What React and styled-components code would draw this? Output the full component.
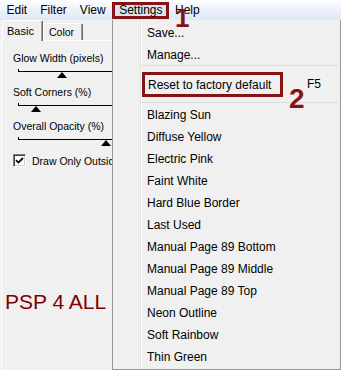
import React from "react";
import styled, { createGlobalStyle } from "styled-components";

const ANNOT = "#861414";

const GlobalStyle = createGlobalStyle`
  html, body {
    margin: 0;
    padding: 0;
    background: #fff;
  }
  body {
    font-family: "Liberation Sans", Arial, sans-serif;
    color: #000;
  }
`;

const Window = styled.div`
  position: relative;
  width: 341px;
  height: 370px;
  overflow: hidden;
  background: #f0f0f0;
  display: flex;
  flex-direction: column;
`;

// top menu bar
const MenuBar = styled.div`
  display: flex;
  align-items: flex-start;
  height: 20px;
  flex-shrink: 0;
  background: linear-gradient(to bottom, #fdfeff 0%, #eef3fa 45%, #dfe8f4 100%);
  font-size: 12px;
`;

const MenuTitle = styled.div`
  height: 20px;
  line-height: 20px;
  padding: 0 6.5px;
  white-space: nowrap;
`;

const ActiveTitle = styled.div`
  margin-top: 2px;
  line-height: 10px;
  padding: 0 3px 1px 4px;
  border: 3px solid ${ANNOT};
  background: #dbe3ee;
  white-space: nowrap;
`;

const Annotation = styled.div`
  position: absolute;
  left: ${(p) => p.$x}px;
  top: ${(p) => p.$y}px;
  font-size: ${(p) => p.$size}px;
  line-height: 1;
  font-weight: bold;
  color: ${ANNOT};
  z-index: 5;
`;

// dialog area
const Body = styled.div`
  flex: 1;
  display: flex;
  flex-direction: column;
`;

const TabStrip = styled.div`
  display: flex;
  align-items: flex-end;
  height: 20px;
  padding-left: 2px;
  font-size: 11px;
`;

const Tab = styled.div`
  box-sizing: border-box;
  position: relative;
  z-index: 1;
  width: ${(p) => (p.$selected ? 41 : 40)}px;
  height: ${(p) => (p.$selected ? 21 : 17)}px;
  margin-bottom: ${(p) => (p.$selected ? -1 : 0)}px;
  padding-left: ${(p) => (p.$selected ? 4 : 5)}px;
  line-height: ${(p) => (p.$selected ? 20 : 17)}px;
  font-size: ${(p) => (p.$selected ? 11 : 10.5)}px;
  background: #f0f0f0;
  border-top: 1px solid #fff;
  border-left: 1px solid #fff;
  border-right: 1px solid #696969;
  box-shadow: inset -1px 0 #a0a0a0;
  border-radius: 2px 2px 0 0;
`;

const Pane = styled.div`
  flex: 1;
  margin-left: 1px;
  border-top: 1px solid #fff;
  border-left: 1px solid #fff;
  padding: 11px 0 0 11px;
  font-size: 10.5px;
`;

const SliderGroup = styled.div`
  margin-bottom: 14px;
`;

const Label = styled.div`
  line-height: 13px;
  white-space: nowrap;
`;

const Track = styled.div`
  position: relative;
  box-sizing: border-box;
  width: 130px;
  height: 3px;
  margin: 4px 0 0 5px;
  border-left: 1px solid #000;
  border-bottom: 1px solid #000;
`;

const Thumb = styled.div`
  position: absolute;
  top: 3px;
  left: ${(p) => p.$pos}px;
  width: 0;
  height: 0;
  border-left: 5.5px solid transparent;
  border-right: 5.5px solid transparent;
  border-bottom: 6px solid #000;
`;

const CheckRow = styled.div`
  display: flex;
  align-items: center;
  gap: 6px;
  height: 13px;
  margin-top: 2px;
  white-space: nowrap;
`;

const CheckBox = styled.div`
  box-sizing: border-box;
  width: 13px;
  height: 13px;
  background: #fff;
  border: 1px solid;
  border-color: #808080 #fff #fff #808080;
  box-shadow: inset 1px 1px #404040, inset -1px -1px #d4d0c8;
  display: flex;
  align-items: center;
  justify-content: center;
`;

const Watermark = styled.div`
  margin: 123px 0 0 -8px;
  font-size: 21px;
  line-height: 24px;
  color: #800000;
  white-space: nowrap;
`;

// dropdown menu
const Dropdown = styled.div`
  position: absolute;
  left: 112px;
  top: 20px;
  width: 227px;
  height: 348px;
  padding-top: 1px;
  box-sizing: content-box;
  border: 1px solid #979797;
  border-top: 0;
  background: linear-gradient(
      to right,
      transparent 27px,
      #e2e3e3 27px,
      #e2e3e3 28px,
      #fff 28px,
      #fff 29px,
      transparent 29px
    ),
    #f0f0f0;
  font-size: 12px;
  z-index: 3;
`;

const Item = styled.div`
  box-sizing: border-box;
  height: 22px;
  padding: 2px 0 0 34px;
  line-height: 20px;
  white-space: nowrap;
`;

const Separator = styled.div`
  height: 1px;
  margin: 0 2px 0 28px;
  background: #dcdcdc;
`;

const ResetItem = styled.div`
  box-sizing: border-box;
  height: 36px;
  padding: 1px 0 0 29px;
  display: flex;
  align-items: center;
  white-space: nowrap;
`;

const ResetBox = styled.div`
  box-sizing: border-box;
  width: 141px;
  height: 25px;
  padding: 1px 0 0 3px;
  line-height: 18px;
  border: 3px solid ${ANNOT};
`;

const Shortcut = styled.span`
  margin: 0 0 2px 24px;
`;

const presets = [
  "Blazing Sun",
  "Diffuse Yellow",
  "Electric Pink",
  "Faint White",
  "Hard Blue Border",
  "Last Used",
  "Manual Page 89 Bottom",
  "Manual Page 89 Middle",
  "Manual Page 89 Top",
  "Neon Outline",
  "Soft Rainbow",
  "Thin Green",
];

const sliders = [
  { label: "Glow Width (pixels)", pos: 37.5 },
  { label: "Soft Corners (%)", pos: 12 },
  { label: "Overall Opacity (%)", pos: 82 },
];

const App = () => {
  return (
    <>
      <GlobalStyle />
      <Window>
        <MenuBar>
          <MenuTitle>Edit</MenuTitle>
          <MenuTitle>Filter</MenuTitle>
          <MenuTitle>View</MenuTitle>
          <ActiveTitle>Settings</ActiveTitle>
          <MenuTitle>Help</MenuTitle>
        </MenuBar>

        <Body>
          <TabStrip>
            <Tab $selected>Basic</Tab>
            <Tab>Color</Tab>
          </TabStrip>
          <Pane>
            {sliders.map((s) => (
              <SliderGroup key={s.label}>
                <Label>{s.label}</Label>
                <Track>
                  <Thumb $pos={s.pos} />
                </Track>
              </SliderGroup>
            ))}
            <CheckRow>
              <CheckBox>
                <svg width="9" height="9" viewBox="0 0 9 9">
                  <path
                    d="M1 4.2 L3.4 6.6 L8 2"
                    fill="none"
                    stroke="#000"
                    strokeWidth="1.8"
                  />
                </svg>
              </CheckBox>
              <span>Draw Only Outside</span>
            </CheckRow>
            <Watermark>PSP 4 ALL</Watermark>
          </Pane>
        </Body>

        <Dropdown>
          <Item>Save...</Item>
          <Item>Manage...</Item>
          <Separator />
          <ResetItem>
            <ResetBox>Reset to factory default</ResetBox>
            <Shortcut>F5</Shortcut>
          </ResetItem>
          <Separator />
          {presets.map((name) => (
            <Item key={name}>{name}</Item>
          ))}
        </Dropdown>

        <Annotation $x={175} $y={4.6} $size={26}>1</Annotation>
        <Annotation $x={289} $y={85.3} $size={28}>2</Annotation>
      </Window>
    </>
  );
};

export default App;
